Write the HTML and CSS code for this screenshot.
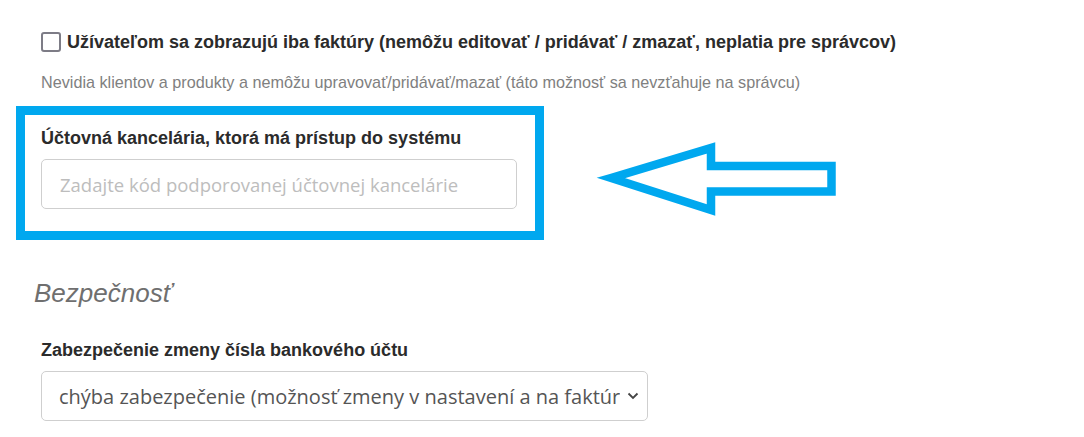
FILE: index.html
```html
<!DOCTYPE html>
<html lang="sk">
<head>
<meta charset="utf-8">
<title>Nastavenia</title>
<link rel="stylesheet" href="styles.css">
</head>
<body>
<div class="page">
  <label class="check-row">
    <span class="checkbox"></span>
    <span class="check-label">Užívateľom sa zobrazujú iba faktúry (nemôžu editovať / pridávať / zmazať, neplatia pre správcov)</span>
  </label>
  <p class="help">Nevidia klientov a produkty a nemôžu upravovať/pridávať/mazať (táto možnosť sa nevzťahuje na správcu)</p>

  <div class="annot-row">
    <div class="highlight">
      <div class="field-label">Účtovná kancelária, ktorá má prístup do systému</div>
      <div class="input"><span class="placeholder">Zadajte kód podporovanej účtovnej kancelárie</span></div>
    </div>
    <svg class="arrow" width="250" height="80" viewBox="590 140 250 80">
      <polygon points="611,179 711,149 711,167 831.5,167 831.5,192.5 711,192.5 711,211" fill="none" stroke="#00a8ef" stroke-width="8.5" stroke-linejoin="miter" stroke-miterlimit="10"/>
    </svg>
  </div>

  <h2 class="section">Bezpečnosť</h2>

  <div class="field-label second">Zabezpečenie zmeny čísla bankového účtu</div>
  <div class="select">
    <span class="select-text">chýba zabezpečenie (možnosť zmeny v nastavení a na faktúre)</span>
    <svg class="chev" width="12" height="8" viewBox="0 0 12 8"><path d="M1.5 1.5 L6 6 L10.5 1.5" fill="none" stroke="#444" stroke-width="1.8"/></svg>
  </div>
</div>
</body>
</html>
```

FILE: styles.css
```css
html, body {
  margin: 0;
  padding: 0;
  background: #fff;
}
.page {
  padding: 31px 0 0 41px;
  font-family: "Liberation Sans", Arial, sans-serif;
  color: #333;
}
.check-row {
  display: flex;
  align-items: center;
  gap: 6px;
  height: 22px;
}
.checkbox {
  width: 16px;
  height: 16px;
  border: 2px solid #7d7c86;
  border-radius: 3px;
  flex: none;
}
.check-label {
  font-weight: bold;
  font-size: 18px;
  color: #2b2b2b;
}
.help {
  margin: 20px 0 0;
  font-size: 16.2px;
  line-height: 18px;
  color: #808080;
}
.annot-row {
  display: flex;
  align-items: flex-start;
  margin: 15px 0 0 -25px;
}
.highlight {
  width: 476px;
  border: 9px solid #00a8ef;
  padding: 12px 18px 22px 16px;
  flex: none;
}
.field-label {
  font-weight: bold;
  font-size: 18px;
  line-height: 22px;
  color: #2b2b2b;
}
.input {
  margin-top: 10px;
  height: 48px;
  border: 1px solid #cfcfcf;
  border-radius: 5px;
  display: flex;
  align-items: center;
  padding-left: 18px;
}
.placeholder {
  font-family: "Open Sans", sans-serif;
  font-size: 18.5px;
  color: #bdbdbd;
}
.arrow {
  margin: 33px 0 0 46px;
  flex: none;
}
.section {
  margin: 38px 0 0 -7px;
  font-size: 26px;
  line-height: 30px;
  font-style: italic;
  font-weight: normal;
  color: #6f6f6f;
}
.field-label.second {
  margin-top: 31px;
}
.select {
  margin-top: 10px;
  height: 48px;
  border: 1px solid #cfcfcf;
  border-radius: 5px;
  display: flex;
  align-items: center;
  padding: 0 8px 0 17px;
  box-sizing: content-box;
  width: 580px;
}
.select-text {
  font-family: "Open Sans", sans-serif;
  font-size: 20px;
  color: #555;
  white-space: nowrap;
  overflow: hidden;
  width: 561px;
  flex: none;
}
.chev {
  margin-left: 7px;
  flex: none;
}
```
